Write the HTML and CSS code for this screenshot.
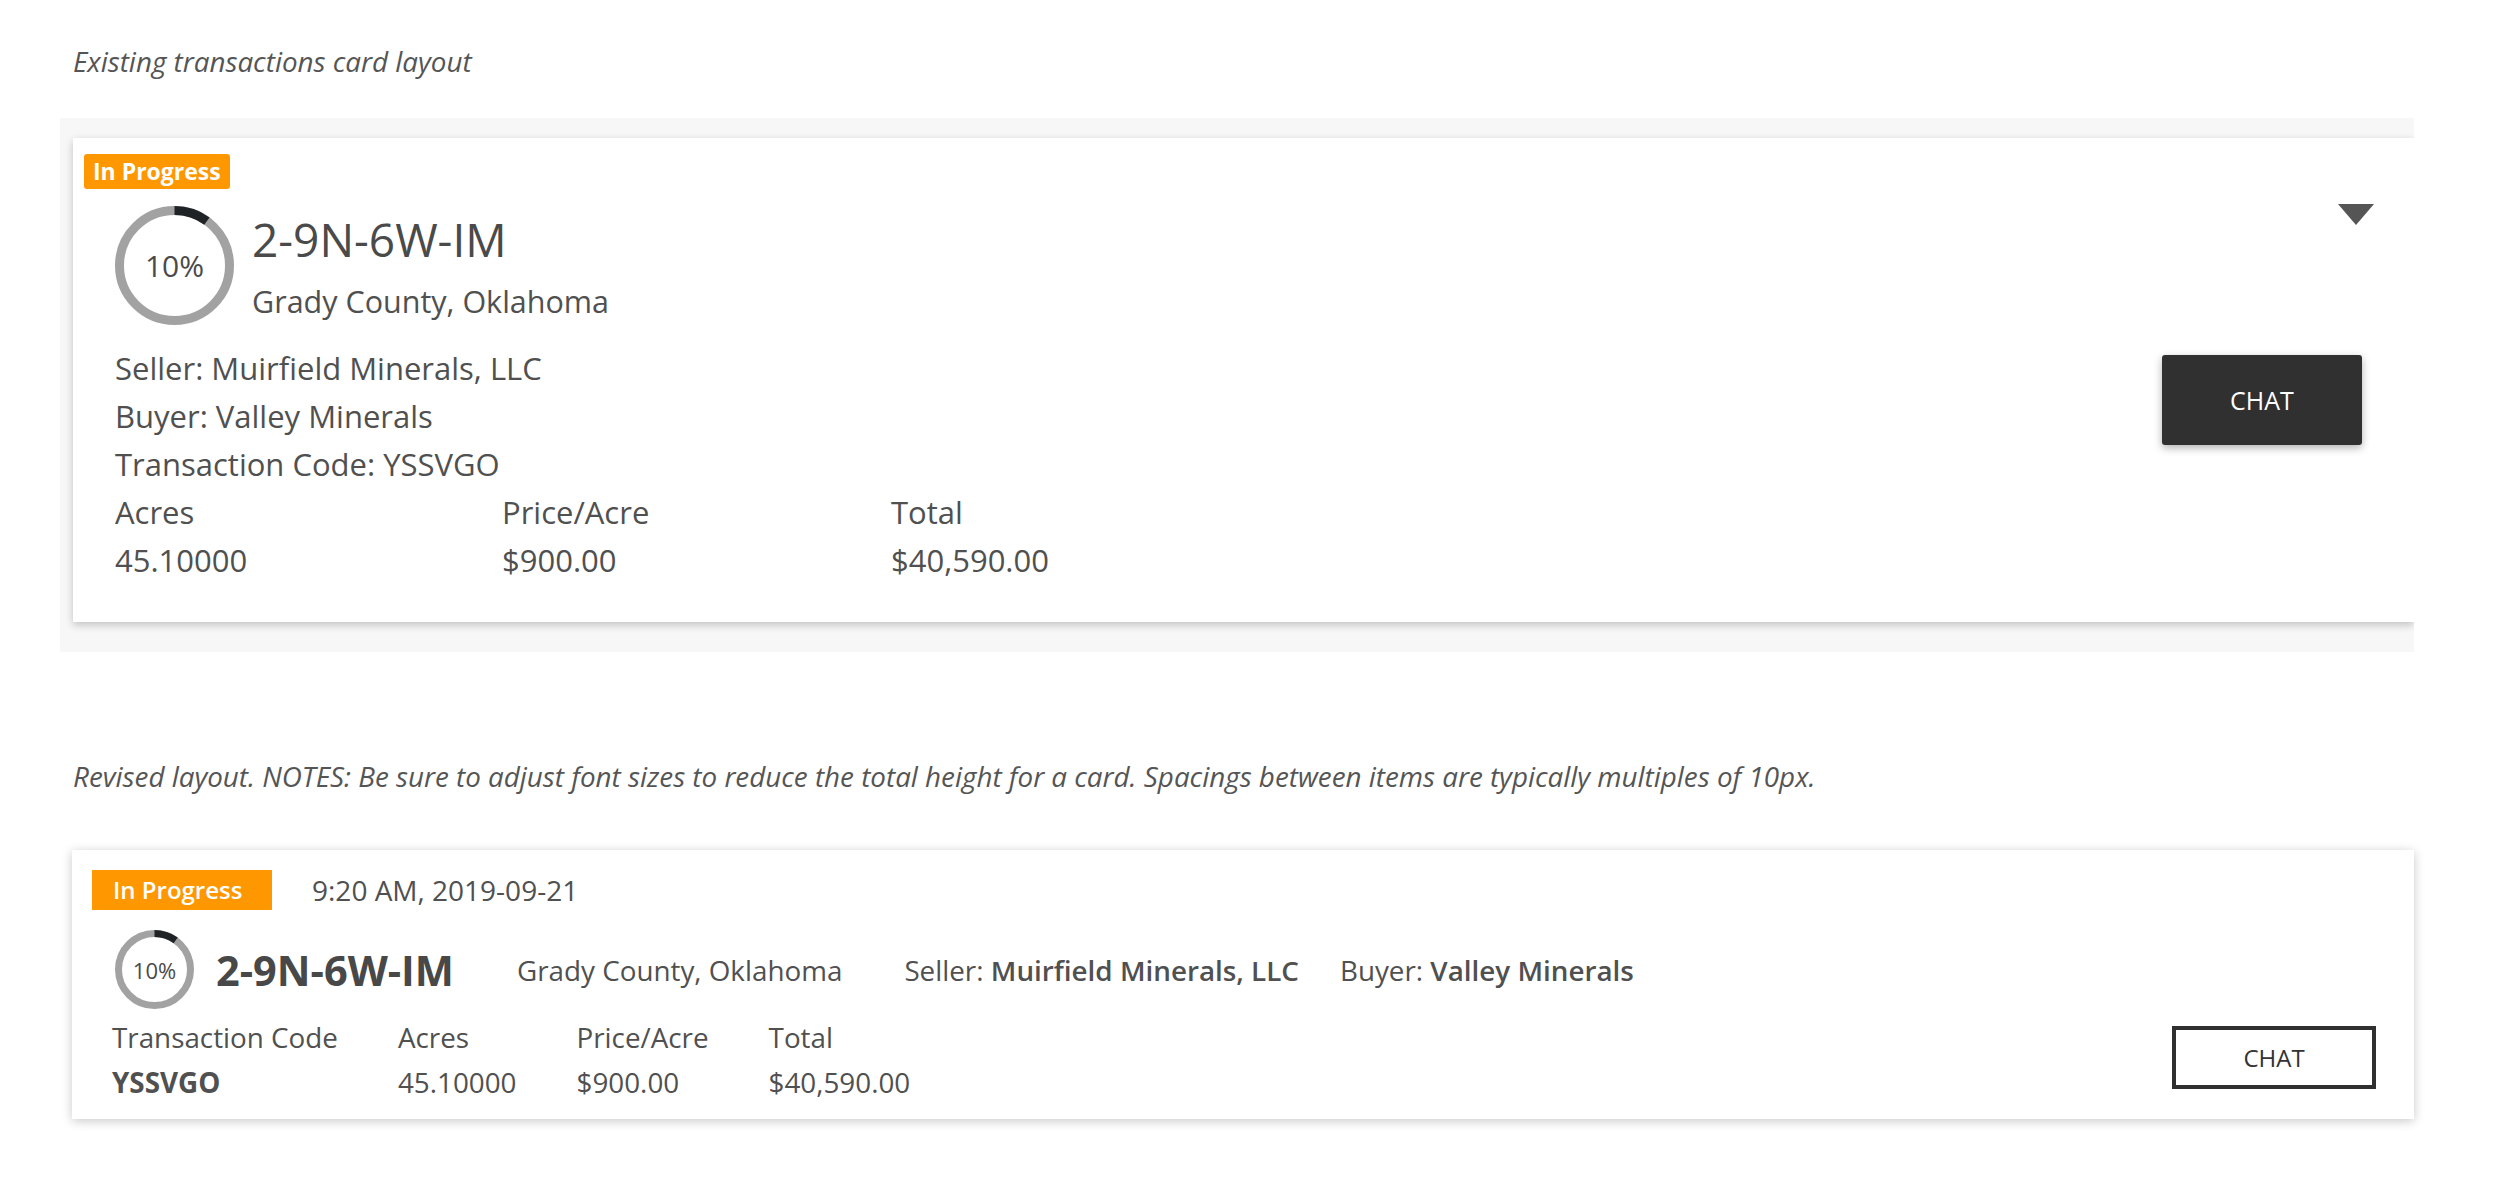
FILE: index.html
```html
<!DOCTYPE html>
<html lang="en">
<head>
    <meta charset="UTF-8">
    <meta name="viewport" content="width=device-width, initial-scale=1.0">
    <title>Transaction cards</title>
    <link rel="stylesheet" href="styles.css">
</head>
<body>
    <p class="note">Existing transactions card layout</p>

    <div class="legacy-wrap">
        <div class="legacy-card">
            <div class="legacy-main">
                <span class="badge badge-old">In Progress</span>

                <div class="legacy-head">
                    <div class="progress progress-lg">
                        <svg width="119" height="119" viewBox="0 0 119 119">
                            <circle class="track" cx="59.5" cy="59.5" r="55" stroke-width="9"/>
                            <circle class="bar" cx="59.5" cy="59.5" r="55" stroke-width="9"
                                    stroke-dasharray="34.6 400" transform="rotate(-90 59.5 59.5)"/>
                        </svg>
                        <span class="pct">10%</span>
                    </div>
                    <div class="legacy-title">
                        <h2>2-9N-6W-IM</h2>
                        <div class="county">Grady County, Oklahoma</div>
                    </div>
                </div>

                <div class="legacy-details">
                    <div>Seller: Muirfield Minerals, LLC</div>
                    <div>Buyer: Valley Minerals</div>
                    <div>Transaction Code: YSSVGO</div>
                    <div class="legacy-grid">
                        <div>Acres</div>
                        <div>Price/Acre</div>
                        <div>Total</div>
                        <div>45.10000</div>
                        <div>$900.00</div>
                        <div>$40,590.00</div>
                    </div>
                </div>
            </div>

            <div class="legacy-side">
                <span class="caret"></span>
                <button class="chat-solid">CHAT</button>
            </div>
        </div>
    </div>

    <p class="note note-revised">Revised layout. NOTES: Be sure to adjust font sizes to reduce the total height for a card. Spacings between items are typically multiples of 10px.</p>

    <div class="card">
        <div class="card-main">
            <div class="card-top">
                <span class="badge">In Progress</span>
                <span class="time">9:20 AM, 2019-09-21</span>
            </div>

            <div class="card-head">
                <div class="progress progress-sm">
                    <svg width="79" height="79" viewBox="0 0 79 79">
                        <circle class="track" cx="39.5" cy="39.5" r="36" stroke-width="7"/>
                        <circle class="bar" cx="39.5" cy="39.5" r="36" stroke-width="7"
                                stroke-dasharray="22.6 300" transform="rotate(-90 39.5 39.5)"/>
                    </svg>
                    <span class="pct">10%</span>
                </div>
                <h2 class="card-title">2-9N-6W-IM</h2>
                <span class="card-county">Grady County, Oklahoma</span>
                <span class="party party-seller">Seller: <b>Muirfield Minerals, LLC</b></span>
                <span class="party party-buyer">Buyer: <b>Valley Minerals</b></span>
            </div>

            <div class="card-grid">
                <div>Transaction Code</div>
                <div>Acres</div>
                <div>Price/Acre</div>
                <div>Total</div>
                <div class="code">YSSVGO</div>
                <div>45.10000</div>
                <div>$900.00</div>
                <div>$40,590.00</div>
            </div>
        </div>

        <button class="chat-outline">CHAT</button>
    </div>
</body>
</html>
```

FILE: styles.css
```css
body {
    margin: 0;
    padding: 43px 86px 40px 60px;
    font-family: "Open Sans", "Noto Sans", sans-serif;
    color: #505050;
    background-color: white;
}

.note {
    margin: 0 0 39px 13px;
    font-size: 27.8px;
    line-height: 36px;
    font-style: italic;
    color: #555;
}

.note-revised {
    margin-top: 106px;
    margin-bottom: 56px;
}

/* shared bits */

.badge {
    display: inline-block;
    background-color: #ff9800;
    color: white;
    font-weight: 600;
    font-size: 24px;
    height: 40px;
    line-height: 40px;
    padding: 0 21px;
    box-sizing: border-box;
    width: 180px;
}

.badge-old {
    width: auto;
    height: 35px;
    line-height: 35px;
    padding: 0 9px;
    font-size: 23px;
    font-weight: 700;
    border-radius: 3px;
}

.progress {
    display: grid;
    place-items: center;
    flex-shrink: 0;
}

.progress svg,
.progress .pct {
    grid-area: 1 / 1;
}

.track {
    fill: none;
    stroke: #a2a2a2;
}

.bar {
    fill: none;
    stroke: #1f2326;
}

.progress-lg .pct {
    font-size: 30px;
    color: #4a4a4a;
}

.progress-sm .pct {
    font-size: 22px;
    color: #4a4a4a;
}

button {
    font-family: "Open Sans", "Noto Sans", sans-serif;
    cursor: pointer;
}

/* existing layout */

.legacy-wrap {
    background-color: #f7f7f7;
    padding: 20px 0 30px 13px;
    overflow: hidden;
}

.legacy-card {
    display: flex;
    background-color: white;
    padding: 16px 0 38px 11px;
    box-shadow: 0 3px 8px rgba(0,0,0,0.22);
}

.legacy-main {
    flex: 1;
}

.legacy-head {
    display: flex;
    align-items: center;
    margin-top: 17px;
    padding-left: 31px;
}

.legacy-title {
    margin-left: 18px;
}

.legacy-title h2 {
    margin: 0;
    font-size: 46px;
    line-height: 56px;
    font-weight: 400;
    color: #4a4a4a;
}

.county {
    margin-top: 14px;
    font-size: 30.5px;
    line-height: 40px;
}

.legacy-details {
    margin-top: 19px;
    padding-left: 31px;
    font-size: 31px;
    line-height: 48px;
}

.legacy-grid {
    display: grid;
    grid-template-columns: 387px 389px auto;
}

.legacy-side {
    display: flex;
    flex-direction: column;
    align-items: flex-end;
    padding: 50px 40px 0 0;
}

.caret {
    width: 0;
    height: 0;
    border-left: 18px solid transparent;
    border-right: 18px solid transparent;
    border-top: 21px solid #555;
}

.chat-solid {
    margin: 130px 12px 0 0;
    width: 200px;
    height: 90px;
    border: none;
    border-radius: 3px;
    background-color: #303030;
    color: white;
    font-size: 25px;
    box-shadow: 0 3px 8px rgba(0,0,0,0.3);
}

/* revised layout */

.card {
    display: flex;
    align-items: flex-end;
    margin-left: 12px;
    padding: 20px 38px 14px 20px;
    background-color: white;
    box-shadow: 0 2px 10px rgba(0,0,0,0.22);
}

.card-main {
    flex: 1;
}

.card-top {
    display: flex;
    align-items: center;
}

.time {
    margin-left: 40px;
    font-size: 28px;
}

.card-head {
    display: flex;
    align-items: center;
    margin-top: 20px;
    padding-left: 23px;
    font-size: 27.8px;
}

.card-title {
    margin: 0 0 0 22px;
    font-size: 41.5px;
    font-weight: 700;
    color: #484848;
}

.card-county {
    margin-left: 63px;
}

.party-seller {
    margin-left: 62px;
}

.party-buyer {
    margin-left: 41px;
}

.party b {
    font-weight: 600;
}

.card-grid {
    display: grid;
    grid-template-columns: repeat(4, auto);
    justify-content: start;
    column-gap: 60px;
    margin-top: 6px;
    padding-left: 20px;
    font-size: 27.8px;
    line-height: 45px;
}

.code {
    font-weight: 700;
}

.chat-outline {
    margin-bottom: 16px;
    width: 204px;
    height: 63px;
    border: 4px solid #303030;
    background-color: white;
    color: #333;
    font-size: 24px;
}
```
